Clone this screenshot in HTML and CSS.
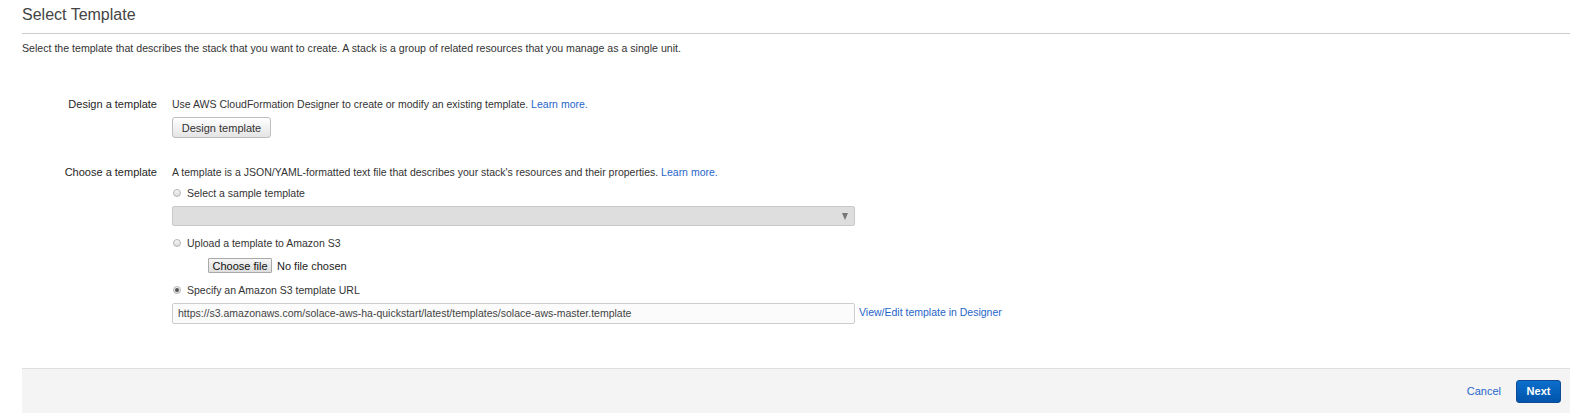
FILE: index.html
```html
<!DOCTYPE html>
<html lang="en">
<head>
<meta charset="utf-8">
<title>Select Template</title>
<link rel="stylesheet" href="styles.css">
</head>
<body>
<div class="page">
  <div class="header">
    <h1 class="title">Select Template</h1>
  </div>
  <p class="intro">Select the template that describes the stack that you want to create. A stack is a group of related resources that you manage as a single unit.</p>

  <div class="form">
    <div class="row row-design">
      <div class="label">Design a template</div>
      <div class="field">
        <div class="text">Use AWS CloudFormation Designer to create or modify an existing template. <a class="link" href="#">Learn more.</a></div>
        <button class="btn" type="button">Design template</button>
      </div>
    </div>

    <div class="row row-choose">
      <div class="label">Choose a template</div>
      <div class="field">
        <div class="text">A template is a JSON/YAML-formatted text file that describes your stack's resources and their properties. <a class="link" href="#">Learn more.</a></div>

        <div class="option option-first"><span class="radio"></span><span>Select a sample template</span></div>
        <div class="select"><span class="caret"></span></div>

        <div class="option option-mid"><span class="radio"></span><span>Upload a template to Amazon S3</span></div>
        <div class="file">
          <span class="file-btn">Choose file</span>
          <span class="file-name">No file chosen</span>
        </div>

        <div class="option option-mid"><span class="radio radio-on"></span><span>Specify an Amazon S3 template URL</span></div>
        <div class="url-row">
          <div class="url-input">https://s3.amazonaws.com/solace-aws-ha-quickstart/latest/templates/solace-aws-master.template</div>
          <a class="link url-link" href="#">View/Edit template in Designer</a>
        </div>
      </div>
    </div>
  </div>

  <div class="footer">
    <a class="link cancel" href="#">Cancel</a>
    <button class="btn-primary" type="button">Next</button>
  </div>
</div>
</body>
</html>
```

FILE: styles.css
```css
* { box-sizing: border-box; }

html, body {
  margin: 0;
  padding: 0;
  background: #ffffff;
}

body {
  font-family: "Liberation Sans", Arial, sans-serif;
  font-size: 10.5px;
  line-height: 14px;
  color: #333333;
}

.page {
  margin-left: 22px;
}

.header {
  padding: 5px 0 8px;
  border-bottom: 1px solid #cccccc;
}

.title {
  margin: 0;
  font-size: 16px;
  line-height: 20px;
  font-weight: normal;
  color: #444444;
}

.intro {
  margin: 7px 0 0;
  font-size: 10.6px;
  line-height: 14px;
}

.form {
  margin-top: 42px;
}

.row {
  display: grid;
  grid-template-columns: 135px 1fr;
  column-gap: 15px;
}

.row-choose {
  margin-top: 27px;
}

.label {
  text-align: right;
  font-size: 11px;
  color: #262626;
  line-height: 14px;
}

.field {
  display: flex;
  flex-direction: column;
  align-items: flex-start;
}

.text {
  line-height: 14px;
}

.link {
  color: #1f66c9;
  text-decoration: none;
}

.btn {
  margin-top: 6px;
  height: 21px;
  width: 99px;
  padding: 0;
  font-family: inherit;
  font-size: 11px;
  color: #333333;
  background: linear-gradient(#ffffff, #e4e4e4);
  border: 1px solid #bdbdbd;
  border-radius: 3px;
}

.option {
  display: flex;
  align-items: center;
  height: 14px;
  line-height: 14px;
}

.option-first { margin-top: 7px; }
.option-mid { margin-top: 10px; }

.radio {
  position: relative;
  width: 8px;
  height: 8px;
  margin-left: 1px;
  margin-right: 6px;
  border-radius: 50%;
  border: 1px solid #b4b4b4;
  background: linear-gradient(#f7f7f7, #dcdcdc);
}

.radio-on::after {
  content: "";
  position: absolute;
  left: 1px;
  top: 1px;
  width: 4px;
  height: 4px;
  border-radius: 50%;
  background: #555555;
}

.select {
  position: relative;
  margin-top: 6px;
  width: 683px;
  height: 20px;
  background: #dedede;
  border: 1px solid #c9c9c9;
  border-radius: 2px;
}

.caret {
  position: absolute;
  right: 6px;
  top: 6px;
  width: 0;
  height: 0;
  border-left: 3.5px solid transparent;
  border-right: 3.5px solid transparent;
  border-top: 7px solid #777777;
}

.file {
  display: flex;
  align-items: center;
  margin-top: 8px;
  margin-left: 36px;
  height: 15px;
}

.file-btn {
  display: flex;
  align-items: center;
  justify-content: center;
  width: 64px;
  height: 15px;
  font-size: 11px;
  color: #111111;
  background: linear-gradient(#f6f6f6, #dedede);
  border: 1px solid #a9a9a9;
  border-radius: 1px;
}

.file-name {
  margin-left: 5px;
  font-size: 11px;
  color: #222222;
}

.url-row {
  display: flex;
  align-items: center;
  margin-top: 6px;
}

.url-input {
  width: 683px;
  height: 21px;
  padding-left: 5px;
  line-height: 19px;
  color: #444444;
  background: #fbfbfb;
  border: 1px solid #cccccc;
  border-radius: 2px;
}

.url-link {
  margin-left: 4px;
  margin-top: -3px;
}

.footer {
  margin-top: 44px;
  height: 45px;
  display: flex;
  align-items: center;
  justify-content: flex-end;
  padding-right: 9px;
  background: #f4f4f4;
  border-top: 1px solid #dedede;
}

.cancel {
  font-size: 11px;
  margin-right: 15px;
}

.btn-primary {
  width: 45px;
  height: 23px;
  padding: 0;
  font-family: inherit;
  font-size: 11px;
  font-weight: bold;
  color: #ffffff;
  background: linear-gradient(#0b6fcc, #0054ab);
  border: 1px solid #114a94;
  border-radius: 3px;
}
```
